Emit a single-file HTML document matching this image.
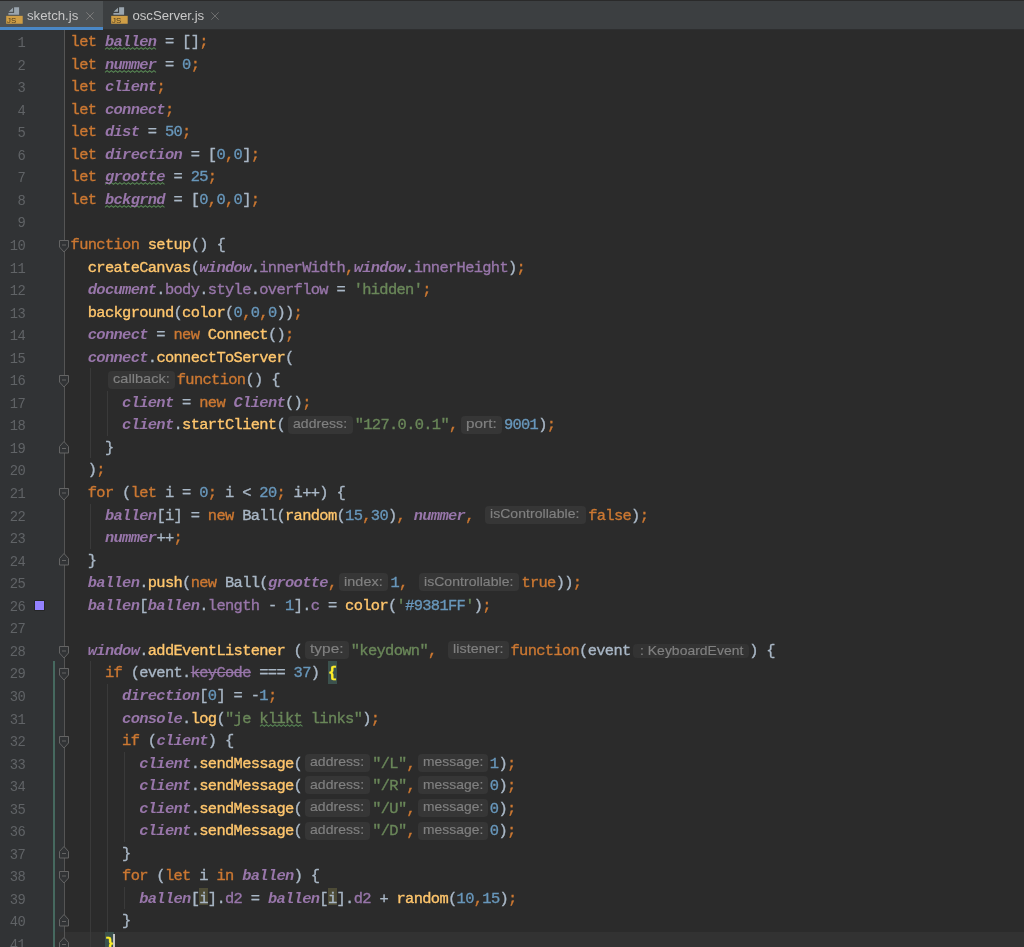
<!DOCTYPE html>
<html><head><meta charset="utf-8"><style>
html,body{margin:0;padding:0;}
body{will-change:transform;width:1024px;height:947px;overflow:hidden;background:#2b2b2b;position:relative;font-family:"Liberation Mono",monospace;}
#tabs{position:absolute;left:0;top:0;width:1024px;height:30px;background:#3c3f41;}
#tabs .topline{position:absolute;left:0;top:0;width:1024px;height:1px;background:#2a2a2a;}
#tabs .bot{position:absolute;left:0;top:28.5px;width:1024px;height:1.5px;background:#2e2f30;}
.tab{position:absolute;top:1px;height:29px;}
.tab.act{background:#4e5254;}
.tab .ul{position:absolute;left:0;right:0;top:26px;height:3px;background:#4a88c7;}
.tab .ic{position:absolute;top:5px;}
.tab .t{position:absolute;top:6.8px;font-family:"Liberation Sans",sans-serif;font-size:13.2px;color:#c8c8c8;white-space:pre;}
.tab .x{position:absolute;top:11.3px;}
#gutter{position:absolute;left:0;top:30px;width:64px;height:917px;background:#313335;}
#gline{position:absolute;left:64px;top:30px;width:1px;height:917px;background:#555555;}
#curline{position:absolute;left:55px;top:932px;width:969px;height:22.55px;background:#323232;}
#teal{position:absolute;left:53.4px;top:661.4px;width:1.3px;height:400px;background:#46695f;}
.L{position:absolute;left:0;width:1024px;height:22.55px;}
.ln{position:absolute;right:998.8px;top:3px;height:22.55px;line-height:22.55px;font-size:13.8px;letter-spacing:-0.5px;color:#606366;}
.r{position:absolute;top:1px;white-space:pre;font-size:15.4px;letter-spacing:-0.66px;line-height:22.55px;color:#a9b7c6;-webkit-text-stroke:0.35px currentColor;}
.k{color:#cc7832;}
.g{color:#9876aa;font-style:italic;font-weight:bold;-webkit-text-stroke:0;}
.f{color:#ffc66d;}
.n{color:#6897bb;}
.s{color:#6a8759;}
.p{color:#9876aa;}
.st{text-decoration:line-through;text-decoration-color:#9876aa;}
.brace{color:#ffef28;font-weight:bold;}
.bbg{position:absolute;background:#3b514d;}
.iv{background:#4d4b36;display:inline-block;height:17.6px;}
.h{position:absolute;top:2.3px;height:18px;border-radius:4px;background:#363636;}
.h span{position:absolute;left:5.2px;top:-0.9px;transform-origin:0 0;line-height:18px;font-family:"Liberation Sans",sans-serif;font-size:13.4px;letter-spacing:0.05px;color:#808080;white-space:pre;-webkit-text-stroke:0.15px #808080;}
.ig{position:absolute;width:1px;background:#3a3a3a;}
.fm{position:absolute;left:59.25px;}
.wv{position:absolute;overflow:visible;}
.h2{top:5.15px;height:14px;background:#333333;}
.h2 span{left:7.6px;top:-1.8px;}
#caret{position:absolute;left:113.2px;top:933.8px;width:2.3px;height:20px;background:#c4c4c4;}
#swatch{position:absolute;left:35.2px;top:600.9px;width:9px;height:9px;background:#9381ff;box-shadow:0 0 0 0.6px #1e1e1e;}

</style></head><body>
<div id="tabs"><div class="topline"></div><div class="bot"></div>
<div class="tab act" style="left:0;width:103px;"><div class="ic" style="left:6px"><svg width="18" height="19" viewBox="0 0 18 19"><path d="M2.65,5.8 L6.95,1.7 V5.8 Z M8.1,1.25 H13.1 V8.8 H2.4 V6.95 H8.1 Z" fill="#9aa5ae"/><rect x="0.2" y="9.85" width="16.5" height="7.9" fill="#cf9e46"/><text x="1.1" y="16.5" font-family="Liberation Sans" font-size="7.8" fill="#4a3a1f">JS</text></svg></div><div class="t" style="left:27px">sketch.js</div>
<svg class="x" style="left:86.3px" width="8" height="8" viewBox="0 0 8 8"><path d="M0.3,0.3 L7.7,7.7 M7.7,0.3 L0.3,7.7" stroke="#7a7a7a" stroke-width="1"/></svg><div class="ul"></div></div>
<div class="tab" style="left:103px;width:130px;"><div class="ic" style="left:8px"><svg width="18" height="19" viewBox="0 0 18 19"><path d="M2.65,5.8 L6.95,1.7 V5.8 Z M8.1,1.25 H13.1 V8.8 H2.4 V6.95 H8.1 Z" fill="#9aa5ae"/><rect x="0.2" y="9.85" width="16.5" height="7.9" fill="#cf9e46"/><text x="1.1" y="16.5" font-family="Liberation Sans" font-size="7.8" fill="#4a3a1f">JS</text></svg></div><div class="t" style="left:29.4px">oscServer.js</div>
<svg class="x" style="left:108.3px" width="8" height="8" viewBox="0 0 8 8"><path d="M0.3,0.3 L7.7,7.7 M7.7,0.3 L0.3,7.7" stroke="#6e6e6e" stroke-width="1"/></svg></div>
</div>
<div id="gutter"></div>
<div id="curline"></div>
<div id="gline"></div>
<div id="teal"></div>
<div class="ig" style="left:89.96px;top:368.25px;height:90.20px"></div>
<div class="ig" style="left:107.12px;top:390.80px;height:45.10px"></div>
<div class="ig" style="left:89.96px;top:503.55px;height:45.10px"></div>
<div class="ig" style="left:89.96px;top:661.40px;height:285.60px"></div>
<div class="ig" style="left:107.12px;top:683.95px;height:248.05px"></div>
<div class="ig" style="left:124.28px;top:751.60px;height:90.20px"></div>
<div class="ig" style="left:124.28px;top:886.90px;height:22.55px"></div>
<svg class="fm" style="top:239.73px" width="10" height="13" viewBox="0 0 10 13"><path d="M0.5,0.5 H9.5 V7 L5,12 L0.5,7 Z" fill="#313335" stroke="#646464" stroke-width="1"/><path d="M3,5.0 H7" stroke="#646464" stroke-width="1"/></svg>
<svg class="fm" style="top:375.02px" width="10" height="13" viewBox="0 0 10 13"><path d="M0.5,0.5 H9.5 V7 L5,12 L0.5,7 Z" fill="#313335" stroke="#646464" stroke-width="1"/><path d="M3,5.0 H7" stroke="#646464" stroke-width="1"/></svg>
<svg class="fm" style="top:440.57px" width="10" height="13" viewBox="0 0 10 13"><path d="M0.5,12 H9.5 V5.5 L5,0.5 L0.5,5.5 Z" fill="#313335" stroke="#646464" stroke-width="1"/><path d="M3,7.5 H7" stroke="#646464" stroke-width="1"/></svg>
<svg class="fm" style="top:487.77px" width="10" height="13" viewBox="0 0 10 13"><path d="M0.5,0.5 H9.5 V7 L5,12 L0.5,7 Z" fill="#313335" stroke="#646464" stroke-width="1"/><path d="M3,5.0 H7" stroke="#646464" stroke-width="1"/></svg>
<svg class="fm" style="top:553.32px" width="10" height="13" viewBox="0 0 10 13"><path d="M0.5,12 H9.5 V5.5 L5,0.5 L0.5,5.5 Z" fill="#313335" stroke="#646464" stroke-width="1"/><path d="M3,7.5 H7" stroke="#646464" stroke-width="1"/></svg>
<svg class="fm" style="top:645.62px" width="10" height="13" viewBox="0 0 10 13"><path d="M0.5,0.5 H9.5 V7 L5,12 L0.5,7 Z" fill="#313335" stroke="#646464" stroke-width="1"/><path d="M3,5.0 H7" stroke="#646464" stroke-width="1"/></svg>
<svg class="fm" style="top:668.17px" width="10" height="13" viewBox="0 0 10 13"><path d="M0.5,0.5 H9.5 V7 L5,12 L0.5,7 Z" fill="#313335" stroke="#646464" stroke-width="1"/><path d="M3,5.0 H7" stroke="#646464" stroke-width="1"/></svg>
<svg class="fm" style="top:735.83px" width="10" height="13" viewBox="0 0 10 13"><path d="M0.5,0.5 H9.5 V7 L5,12 L0.5,7 Z" fill="#313335" stroke="#646464" stroke-width="1"/><path d="M3,5.0 H7" stroke="#646464" stroke-width="1"/></svg>
<svg class="fm" style="top:846.48px" width="10" height="13" viewBox="0 0 10 13"><path d="M0.5,12 H9.5 V5.5 L5,0.5 L0.5,5.5 Z" fill="#313335" stroke="#646464" stroke-width="1"/><path d="M3,7.5 H7" stroke="#646464" stroke-width="1"/></svg>
<svg class="fm" style="top:871.12px" width="10" height="13" viewBox="0 0 10 13"><path d="M0.5,0.5 H9.5 V7 L5,12 L0.5,7 Z" fill="#313335" stroke="#646464" stroke-width="1"/><path d="M3,5.0 H7" stroke="#646464" stroke-width="1"/></svg>
<svg class="fm" style="top:914.12px" width="10" height="13" viewBox="0 0 10 13"><path d="M0.5,12 H9.5 V5.5 L5,0.5 L0.5,5.5 Z" fill="#313335" stroke="#646464" stroke-width="1"/><path d="M3,7.5 H7" stroke="#646464" stroke-width="1"/></svg>
<svg class="fm" style="top:936.67px" width="10" height="13" viewBox="0 0 10 13"><path d="M0.5,12 H9.5 V5.5 L5,0.5 L0.5,5.5 Z" fill="#313335" stroke="#646464" stroke-width="1"/><path d="M3,7.5 H7" stroke="#646464" stroke-width="1"/></svg>
<svg class="wv" style="left:105.32px;top:47.10px" width="52.68" height="3.2"><polyline points="0.00,2.40 2.12,0.60 4.25,2.40 6.38,0.60 8.50,2.40 10.62,0.60 12.75,2.40 14.88,0.60 17.00,2.40 19.12,0.60 21.25,2.40 23.38,0.60 25.50,2.40 27.62,0.60 29.75,2.40 31.88,0.60 34.00,2.40 36.12,0.60 38.25,2.40 40.38,0.60 42.50,2.40 44.62,0.60 46.75,2.40 48.88,0.60 51.00,2.40" fill="none" stroke="#588855" stroke-width="1.05"/></svg>
<svg class="wv" style="left:105.32px;top:69.65px" width="52.68" height="3.2"><polyline points="0.00,2.40 2.12,0.60 4.25,2.40 6.38,0.60 8.50,2.40 10.62,0.60 12.75,2.40 14.88,0.60 17.00,2.40 19.12,0.60 21.25,2.40 23.38,0.60 25.50,2.40 27.62,0.60 29.75,2.40 31.88,0.60 34.00,2.40 36.12,0.60 38.25,2.40 40.38,0.60 42.50,2.40 44.62,0.60 46.75,2.40 48.88,0.60 51.00,2.40" fill="none" stroke="#588855" stroke-width="1.05"/></svg>
<svg class="wv" style="left:105.32px;top:182.40px" width="61.26" height="3.2"><polyline points="0.00,2.40 2.12,0.60 4.25,2.40 6.38,0.60 8.50,2.40 10.62,0.60 12.75,2.40 14.88,0.60 17.00,2.40 19.12,0.60 21.25,2.40 23.38,0.60 25.50,2.40 27.62,0.60 29.75,2.40 31.88,0.60 34.00,2.40 36.12,0.60 38.25,2.40 40.38,0.60 42.50,2.40 44.62,0.60 46.75,2.40 48.88,0.60 51.00,2.40 53.12,0.60 55.25,2.40 57.38,0.60 59.50,2.40" fill="none" stroke="#588855" stroke-width="1.05"/></svg>
<svg class="wv" style="left:105.32px;top:204.95px" width="61.26" height="3.2"><polyline points="0.00,2.40 2.12,0.60 4.25,2.40 6.38,0.60 8.50,2.40 10.62,0.60 12.75,2.40 14.88,0.60 17.00,2.40 19.12,0.60 21.25,2.40 23.38,0.60 25.50,2.40 27.62,0.60 29.75,2.40 31.88,0.60 34.00,2.40 36.12,0.60 38.25,2.40 40.38,0.60 42.50,2.40 44.62,0.60 46.75,2.40 48.88,0.60 51.00,2.40 53.12,0.60 55.25,2.40 57.38,0.60 59.50,2.40" fill="none" stroke="#588855" stroke-width="1.05"/></svg>
<svg class="wv" style="left:259.76px;top:723.60px" width="44.10" height="3.2"><polyline points="0.00,2.40 2.12,0.60 4.25,2.40 6.38,0.60 8.50,2.40 10.62,0.60 12.75,2.40 14.88,0.60 17.00,2.40 19.12,0.60 21.25,2.40 23.38,0.60 25.50,2.40 27.62,0.60 29.75,2.40 31.88,0.60 34.00,2.40 36.12,0.60 38.25,2.40 40.38,0.60 42.50,2.40" fill="none" stroke="#588855" stroke-width="1.05"/></svg>
<div id="swatch"></div>
<div class="bbg" style="left:328.3px;top:661.3px;width:8.7px;height:22.8px"></div>
<div class="bbg" style="left:105px;top:932px;width:8.75px;height:15px"></div>
<div class="L" style="top:30.00px"><div class="ln">1</div><div class="r" style="left:70.60px"><span class="k">let </span><span class="g w">ballen</span> = []<span class="k">;</span></div></div>
<div class="L" style="top:52.55px"><div class="ln">2</div><div class="r" style="left:70.60px"><span class="k">let </span><span class="g w">nummer</span> = <span class="n">0</span><span class="k">;</span></div></div>
<div class="L" style="top:75.10px"><div class="ln">3</div><div class="r" style="left:70.60px"><span class="k">let </span><span class="g">client</span><span class="k">;</span></div></div>
<div class="L" style="top:97.65px"><div class="ln">4</div><div class="r" style="left:70.60px"><span class="k">let </span><span class="g">connect</span><span class="k">;</span></div></div>
<div class="L" style="top:120.20px"><div class="ln">5</div><div class="r" style="left:70.60px"><span class="k">let </span><span class="g">dist</span> = <span class="n">50</span><span class="k">;</span></div></div>
<div class="L" style="top:142.75px"><div class="ln">6</div><div class="r" style="left:70.60px"><span class="k">let </span><span class="g">direction</span> = [<span class="n">0</span><span class="k">,</span><span class="n">0</span>]<span class="k">;</span></div></div>
<div class="L" style="top:165.30px"><div class="ln">7</div><div class="r" style="left:70.60px"><span class="k">let </span><span class="g w">grootte</span> = <span class="n">25</span><span class="k">;</span></div></div>
<div class="L" style="top:187.85px"><div class="ln">8</div><div class="r" style="left:70.60px"><span class="k">let </span><span class="g w">bckgrnd</span> = [<span class="n">0</span><span class="k">,</span><span class="n">0</span><span class="k">,</span><span class="n">0</span>]<span class="k">;</span></div></div>
<div class="L" style="top:210.40px"><div class="ln">9</div></div>
<div class="L" style="top:232.95px"><div class="ln">10</div><div class="r" style="left:70.60px"><span class="k">function </span><span class="f">setup</span>() {</div></div>
<div class="L" style="top:255.50px"><div class="ln">11</div><div class="r" style="left:70.60px">  <span class="f">createCanvas</span>(<span class="g">window</span>.<span class="p">innerWidth</span><span class="k">,</span><span class="g">window</span>.<span class="p">innerHeight</span>)<span class="k">;</span></div></div>
<div class="L" style="top:278.05px"><div class="ln">12</div><div class="r" style="left:70.60px">  <span class="g">document</span>.<span class="p">body</span>.<span class="p">style</span>.<span class="p">overflow</span> = <span class="s">'hidden'</span><span class="k">;</span></div></div>
<div class="L" style="top:300.60px"><div class="ln">13</div><div class="r" style="left:70.60px">  <span class="f">background</span>(<span class="f">color</span>(<span class="n">0</span><span class="k">,</span><span class="n">0</span><span class="k">,</span><span class="n">0</span>))<span class="k">;</span></div></div>
<div class="L" style="top:323.15px"><div class="ln">14</div><div class="r" style="left:70.60px">  <span class="g">connect</span> = <span class="k">new</span> <span class="f">Connect</span>()<span class="k">;</span></div></div>
<div class="L" style="top:345.70px"><div class="ln">15</div><div class="r" style="left:70.60px">  <span class="g">connect</span>.<span class="f">connectToServer</span>(</div></div>
<div class="L" style="top:368.25px"><div class="ln">16</div><div class="r" style="left:70.60px">    </div><div class="h" style="left:107.50px;width:67.20px"><span style="transform:scaleX(1.081)">callback:</span></div><div class="r" style="left:176.80px"><span class="k">function</span>() {</div></div>
<div class="L" style="top:390.80px"><div class="ln">17</div><div class="r" style="left:70.60px">      <span class="g">client</span> = <span class="k">new</span> <span class="g">Client</span>()<span class="k">;</span></div></div>
<div class="L" style="top:413.35px"><div class="ln">18</div><div class="r" style="left:70.60px">      <span class="g">client</span>.<span class="f">startClient</span>(</div><div class="h" style="left:287.80px;width:65.20px"><span style="transform:scaleX(1.045)">address:</span></div><div class="r" style="left:354.70px"><span class="s">"127.0.0.1"</span><span class="k">,</span></div><div class="h" style="left:460.90px;width:41.10px"><span style="transform:scaleX(1.139)">port:</span></div><div class="r" style="left:503.90px"><span class="n">9001</span>)<span class="k">;</span></div></div>
<div class="L" style="top:435.90px"><div class="ln">19</div><div class="r" style="left:70.60px">    }</div></div>
<div class="L" style="top:458.45px"><div class="ln">20</div><div class="r" style="left:70.60px">  )<span class="k">;</span></div></div>
<div class="L" style="top:481.00px"><div class="ln">21</div><div class="r" style="left:70.60px">  <span class="k">for</span> (<span class="k">let</span> i = <span class="n">0</span><span class="k">;</span> i &lt; <span class="n">20</span><span class="k">;</span> i++) {</div></div>
<div class="L" style="top:503.55px"><div class="ln">22</div><div class="r" style="left:70.60px">    <span class="g">ballen</span>[i] = <span class="k">new</span> Ball(<span class="f">random</span>(<span class="n">15</span><span class="k">,</span><span class="n">30</span>)<span class="k">,</span> <span class="g">nummer</span><span class="k">,</span> </div><div class="h" style="left:485.00px;width:100.90px"><span style="transform:scaleX(1.045)">isControllable:</span></div><div class="r" style="left:588.20px"><span class="k">false</span>)<span class="k">;</span></div></div>
<div class="L" style="top:526.10px"><div class="ln">23</div><div class="r" style="left:70.60px">    <span class="g">nummer</span>++<span class="k">;</span></div></div>
<div class="L" style="top:548.65px"><div class="ln">24</div><div class="r" style="left:70.60px">  }</div></div>
<div class="L" style="top:571.20px"><div class="ln">25</div><div class="r" style="left:70.60px">  <span class="g">ballen</span>.<span class="f">push</span>(<span class="k">new</span> Ball(<span class="g">grootte</span><span class="k">,</span></div><div class="h" style="left:339.20px;width:49.20px"><span style="transform:scaleX(1.076)">index:</span></div><div class="r" style="left:390.50px"><span class="n">1</span><span class="k">,</span> </div><div class="h" style="left:419.00px;width:100.00px"><span style="transform:scaleX(1.045)">isControllable:</span></div><div class="r" style="left:521.40px"><span class="k">true</span>))<span class="k">;</span></div></div>
<div class="L" style="top:593.75px"><div class="ln">26</div><div class="r" style="left:70.60px">  <span class="g">ballen</span>[<span class="g">ballen</span>.<span class="p">length</span> - <span class="n">1</span>].<span class="p">c</span> = <span class="f">color</span>(<span class="s">'</span><span class="n">#9381FF</span><span class="s">'</span>)<span class="k">;</span></div></div>
<div class="L" style="top:616.30px"><div class="ln">27</div></div>
<div class="L" style="top:638.85px"><div class="ln">28</div><div class="r" style="left:70.60px">  <span class="g">window</span>.<span class="f">addEventListener</span> (</div><div class="h" style="left:305.20px;width:43.80px"><span style="transform:scaleX(1.149)">type:</span></div><div class="r" style="left:350.80px"><span class="s">"keydown"</span><span class="k">,</span> </div><div class="h" style="left:447.80px;width:60.95px"><span style="transform:scaleX(1.066)">listener:</span></div><div class="r" style="left:510.50px"><span class="k">function</span>(event</div><div class="h h2" style="left:632.50px;width:116.90px"><span style="transform:scaleX(1.036)">: KeyboardEvent</span></div><div class="r" style="left:749.20px">) {</div></div>
<div class="L" style="top:661.40px"><div class="ln">29</div><div class="r" style="left:70.60px">    <span class="k">if</span> (event.<span class="p st">keyCode</span> === <span class="n">37</span>) <span class="brace">{</span></div></div>
<div class="L" style="top:683.95px"><div class="ln">30</div><div class="r" style="left:70.60px">      <span class="g">direction</span>[<span class="n">0</span>] = -<span class="n">1</span><span class="k">;</span></div></div>
<div class="L" style="top:706.50px"><div class="ln">31</div><div class="r" style="left:70.60px">      <span class="g">console</span>.<span class="f">log</span>(<span class="s">"je </span><span class="s w">klikt</span><span class="s"> links"</span>)<span class="k">;</span></div></div>
<div class="L" style="top:729.05px"><div class="ln">32</div><div class="r" style="left:70.60px">      <span class="k">if</span> (<span class="g">client</span>) {</div></div>
<div class="L" style="top:751.60px"><div class="ln">33</div><div class="r" style="left:70.60px">        <span class="g">client</span>.<span class="f">sendMessage</span>(</div><div class="h" style="left:304.90px;width:64.90px"><span style="transform:scaleX(1.045)">address:</span></div><div class="r" style="left:372.20px"><span class="s">"/L"</span><span class="k">,</span></div><div class="h" style="left:417.90px;width:70.30px"><span style="transform:scaleX(1.031)">message:</span></div><div class="r" style="left:489.80px"><span class="n">1</span>)<span class="k">;</span></div></div>
<div class="L" style="top:774.15px"><div class="ln">34</div><div class="r" style="left:70.60px">        <span class="g">client</span>.<span class="f">sendMessage</span>(</div><div class="h" style="left:304.90px;width:64.90px"><span style="transform:scaleX(1.045)">address:</span></div><div class="r" style="left:372.20px"><span class="s">"/R"</span><span class="k">,</span></div><div class="h" style="left:417.90px;width:70.30px"><span style="transform:scaleX(1.031)">message:</span></div><div class="r" style="left:489.80px"><span class="n">0</span>)<span class="k">;</span></div></div>
<div class="L" style="top:796.70px"><div class="ln">35</div><div class="r" style="left:70.60px">        <span class="g">client</span>.<span class="f">sendMessage</span>(</div><div class="h" style="left:304.90px;width:64.90px"><span style="transform:scaleX(1.045)">address:</span></div><div class="r" style="left:372.20px"><span class="s">"/U"</span><span class="k">,</span></div><div class="h" style="left:417.90px;width:70.30px"><span style="transform:scaleX(1.031)">message:</span></div><div class="r" style="left:489.80px"><span class="n">0</span>)<span class="k">;</span></div></div>
<div class="L" style="top:819.25px"><div class="ln">36</div><div class="r" style="left:70.60px">        <span class="g">client</span>.<span class="f">sendMessage</span>(</div><div class="h" style="left:304.90px;width:64.90px"><span style="transform:scaleX(1.045)">address:</span></div><div class="r" style="left:372.20px"><span class="s">"/D"</span><span class="k">,</span></div><div class="h" style="left:417.90px;width:70.30px"><span style="transform:scaleX(1.031)">message:</span></div><div class="r" style="left:489.80px"><span class="n">0</span>)<span class="k">;</span></div></div>
<div class="L" style="top:841.80px"><div class="ln">37</div><div class="r" style="left:70.60px">      }</div></div>
<div class="L" style="top:864.35px"><div class="ln">38</div><div class="r" style="left:70.60px">      <span class="k">for</span> (<span class="k">let</span> i <span class="k">in</span> <span class="g">ballen</span>) {</div></div>
<div class="L" style="top:886.90px"><div class="ln">39</div><div class="r" style="left:70.60px">        <span class="g">ballen</span>[<span class="iv">i</span>].<span class="p">d2</span> = <span class="g">ballen</span>[<span class="iv">i</span>].<span class="p">d2</span> + <span class="f">random</span>(<span class="n">10</span><span class="k">,</span><span class="n">15</span>)<span class="k">;</span></div></div>
<div class="L" style="top:909.45px"><div class="ln">40</div><div class="r" style="left:70.60px">      }</div></div>
<div class="L" style="top:932.00px"><div class="ln">41</div><div class="r" style="left:70.60px">    <span class="brace">}</span></div></div>
<div id="caret"></div>
</body></html>
